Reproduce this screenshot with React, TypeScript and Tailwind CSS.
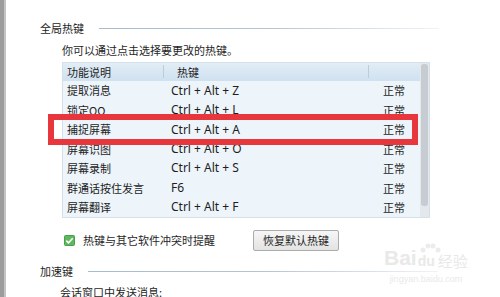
import React from "react";

const rows: [string, string, string][] = [
  ["提取消息", "Ctrl + Alt + Z", "正常"],
  ["锁定QQ", "Ctrl + Alt + L", "正常"],
  ["捕捉屏幕", "Ctrl + Alt + A", "正常"],
  ["屏幕识图", "Ctrl + Alt + O", "正常"],
  ["屏幕录制", "Ctrl + Alt + S", "正常"],
  ["群通话按住发言", "F6", "正常"],
  ["屏幕翻译", "Ctrl + Alt + F", "正常"],
];

function SectionTitle({ text, lineWidth }: { text: string; lineWidth: string }) {
  return (
    <div className="flex items-center h-[16px] pl-[34px]">
      <span className="leading-[16px]">{text}</span>
      <div className={`ml-[15px] h-px bg-gradient-to-r from-[#a6bccd] via-[#b3c5d3] to-[#f0f3f6] ${lineWidth}`} />
    </div>
  );
}

export default function App() {
  return (
    <div
      className="relative w-[500px] h-[297px] overflow-hidden bg-white flex text-[11px] text-[#1e1e1e]"
      style={{ fontFamily: '"Noto Sans CJK SC", "Noto Sans", sans-serif' }}
    >
      <div className="w-[6px] h-full flex">
        <div className="w-[4px] h-full bg-[#9c9c9c]" />
        <div className="w-[2px] h-full bg-[#c4c4c4]" />
      </div>
      <div className="flex-1 flex flex-col">
        <div className="mt-[20px]">
          <SectionTitle text="全局热键" lineWidth="w-[340px]" />
        </div>
        <div className="pl-[56px] mt-[6px] h-[16px] leading-[16px]">你可以通过点击选择要更改的热键。</div>
        <div className="ml-[56px] mt-[4px] w-[368px] h-[156px] flex border border-[#d4e0ea] bg-[#edf4fa]">
          <div className="flex-1 flex flex-col">
            <div className="h-[18px] flex items-center bg-gradient-to-b from-[#e2edf6] to-[#cfe1ef]">
              <div className="w-[100px] pl-[4px]">功能说明</div>
              <div className="w-px h-[13px] bg-[#b9cddd]" />
              <div className="w-[204px] pl-[13px]">热键</div>
              <div className="w-px h-[13px] bg-[#b9cddd]" />
              <div className="flex-1" />
            </div>
            {rows.map(([a, b, c]) => (
              <div key={a} className="h-[19.5px] flex items-center">
                <div className="w-[101px] pl-[4px]">{a}</div>
                <div className="w-[205px] pl-[7px] text-[12px]" style={{ fontFamily: '"Noto Sans", sans-serif' }}>{b}</div>
                <div className="flex-1 pl-[14px]">{c}</div>
              </div>
            ))}
          </div>
          <div className="w-[9px] h-full bg-[#e4e8ec] flex justify-center">
            <div className="w-[7px] h-[142px] mt-px rounded-[3px] bg-[#c6ccd1]" />
          </div>
        </div>
        <div className="pl-[56px] mt-[12px] h-[21px] flex items-center">
          <div className="w-[191px] flex items-center">
            <svg width="11" height="11" viewBox="0 0 11 11" className="ml-[2px]">
              <rect x="0.5" y="0.5" width="10" height="10" rx="1" fill="#5db85f" stroke="#4a9e4c" />
              <path d="M2.3 5.6 L4.5 7.8 L8.7 3.2" stroke="#fff" strokeWidth="1.6" fill="none" />
            </svg>
            <span className="ml-[8px]">热键与其它软件冲突时提醒</span>
          </div>
          <div className="w-[86px] h-[21px] flex items-center justify-center border border-[#acacac] rounded-[2px] bg-gradient-to-b from-[#f6f6f6] to-[#e3e3e3]">
            恢复默认热键
          </div>
        </div>
        <div className="mt-[12px]">
          <SectionTitle text="加速键" lineWidth="w-[350px]" />
        </div>
        <div className="pl-[54px] mt-[5px] h-[16px] leading-[16px]">会话窗口中发送消息:</div>
      </div>

      {/* red highlight box */}
      <div className="absolute left-[48px] top-[114px] w-[370px] h-[31px] border-[6px] border-[#e8373c]" />

      {/* watermark */}
      <div className="absolute left-[384px] top-[247px] flex flex-col items-center text-[#e9e9e9]">
        <div className="flex items-end leading-none">
          <span className="text-[21px] font-bold" style={{ fontFamily: '"Liberation Sans", sans-serif' }}>Bai</span>
          <span className="relative text-[14px] font-bold mx-[1px]" style={{ fontFamily: '"Liberation Sans", sans-serif' }}>
            <svg width="24" height="14" viewBox="0 0 24 14" className="absolute -top-[12px] left-0">
              <circle cx="5" cy="8" r="2.5" fill="#ececec" />
              <circle cx="10" cy="4" r="2.5" fill="#ececec" />
              <circle cx="15" cy="4" r="2.5" fill="#ececec" />
              <circle cx="20" cy="8" r="2.5" fill="#ececec" />
            </svg>
            du
          </span>
          <span className="text-[15px] ml-[2px]">经验</span>
        </div>
        <div className="text-[9px] mt-[5px]" style={{ fontFamily: '"Liberation Sans", sans-serif' }}>jingyan.baidu.com</div>
      </div>
    </div>
  );
}
